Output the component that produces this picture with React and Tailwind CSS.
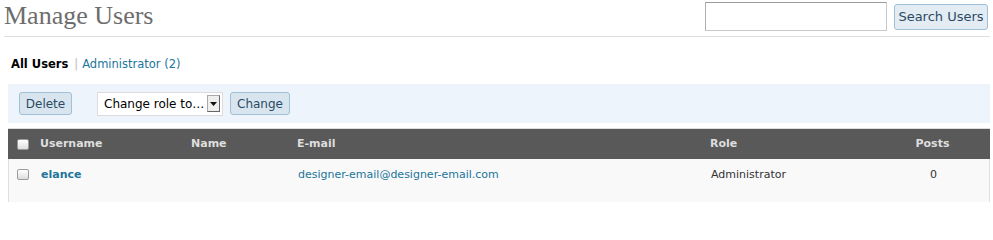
import React from 'react'

const ui = { fontFamily: '"DejaVu Sans", "Liberation Sans", sans-serif' }

const Checkbox = () => (
  <span className="inline-block h-[11px] w-[12px] rounded-[2px] border border-[#9a9a9a] bg-gradient-to-b from-white to-[#dedede] shadow-[inset_0_1px_0_#fff]" />
)

const columns = 'grid grid-cols-[32px_151px_106px_413px_190px_65px_1fr]'

export default function App() {
  return (
    <div className="h-[202px] w-[993px] overflow-hidden bg-white" style={ui}>
      <div className="mx-[4px] flex h-[37px] w-[986px] items-start justify-between border-b border-[#dfdfdf]">
        <h2
          className="pt-[1px] text-[26px] leading-[30px] text-[#6d6d6d]"
          style={{ fontFamily: 'Georgia, "Liberation Serif", "DejaVu Serif", serif' }}
        >
          Manage Users
        </h2>
        <div className="mr-[2px] flex items-start gap-[7px] pt-[2px]">
          <input
            type="text"
            className="h-[29px] w-[182px] border border-[#c9c9c9] border-t-[#9a9a9a] border-l-[#b0b0b0] bg-white"
          />
          <button className="mt-[2px] h-[26px] w-[94px] rounded-[3px] border border-[#9fc0d6] bg-[#e3ecf3] text-[13px] text-[#2a4a63]">
            Search Users
          </button>
        </div>
      </div>

      <div className="flex h-[47px] items-center pl-[11px] pt-[8px] text-[11.5px]">
        <span className="font-bold text-black">All Users</span>
        <span className="ml-[6px] mr-[4px] text-[#bbb]">|</span>
        <span className="text-[#21759b]">Administrator (2)</span>
      </div>

      <div className="ml-[8px] flex h-[39px] w-[982px] items-center bg-[#edf4fb] pl-[11px]">
        <button className="h-[23px] w-[53px] rounded-[3px] border border-[#9fc0d6] bg-[#d8e5ef] text-[12px] text-[#2a4a63]">
          Delete
        </button>
        <div className="ml-[25px] flex h-[24px] w-[126px] items-center justify-between border border-[#dcdcdc] bg-white pl-[6px] pr-[2px] text-[12px] text-black">
          <span>Change role to…</span>
          <span className="flex h-[17px] w-[13px] items-center justify-center border border-[#aaa] border-r-[#666] border-b-[#666] bg-[#eee]">
            <svg width="7" height="4" viewBox="0 0 7 4">
              <path d="M0 0h7L3.5 4z" fill="#111" />
            </svg>
          </span>
        </div>
        <button className="ml-[7px] h-[23px] w-[60px] rounded-[3px] border border-[#9fc0d6] bg-[#d8e5ef] text-[12px] text-[#2a4a63]">
          Change
        </button>
      </div>

      <div className="ml-[8px] mt-[5px] w-[982px] border-t border-[#dcdcdc]">
        <div className={`${columns} h-[30px] items-center bg-[#595959] text-[11px] font-bold text-[#dedede]`}>
          <div className="flex pl-[9px]">
            <Checkbox />
          </div>
          <div>Username</div>
          <div>Name</div>
          <div>E-mail</div>
          <div>Role</div>
          <div className="text-center">Posts</div>
          <div />
        </div>
        <div className={`${columns} h-[43px] items-start border-x border-[#dfdfdf] bg-[#f9f9f9] pt-[8px] text-[11px]`}>
          <div className="flex pl-[8px] pt-[2px]">
            <Checkbox />
          </div>
          <div className="font-bold text-[#21759b]">elance</div>
          <div />
          <div className="text-[#21759b]">designer-email@designer-email.com</div>
          <div className="text-[#333]">Administrator</div>
          <div className="text-center text-[#333]">0</div>
          <div />
        </div>
      </div>
    </div>
  )
}
